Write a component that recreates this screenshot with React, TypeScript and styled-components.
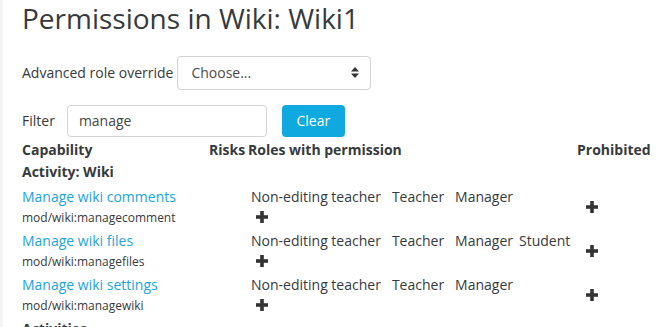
import React from 'react'
import styled, { createGlobalStyle } from 'styled-components'

const GlobalStyle = createGlobalStyle`
    html, body {
        margin: 0;
        padding: 0;
        background: #fff;
    }
    body {
        font-family: "Open Sans", "Liberation Sans", sans-serif;
        color: #373a3c;
        font-size: 14px;
    }
`

const Page = styled.div`
    border-left: 3px solid #f2f2f2;
    padding: 2px 0 0 19px;
    height: 327px;
    overflow: hidden;
    box-sizing: border-box;
`

const Title = styled.h2`
    font-size: 28px;
    font-weight: 400;
    line-height: 1.2;
    margin: 0 0 20px;
`

const FormRow = styled.div<{ gap: number; bottom: number }>`
    display: flex;
    align-items: center;
    gap: ${props => props.gap}px;
    margin-bottom: ${props => props.bottom}px;
`

const Label = styled.label`
    font-size: 14px;
`

const Select = styled.div`
    width: 194px;
    height: 34px;
    box-sizing: border-box;
    border: 1px solid #d3d3d3;
    border-radius: 4px;
    display: flex;
    align-items: center;
    justify-content: space-between;
    padding: 0 11px 0 13px;
    font-size: 14px;
    color: #4a4a4a;
`

const Input = styled.div`
    width: 200px;
    height: 32px;
    box-sizing: border-box;
    border: 1px solid #d3d3d3;
    border-radius: 4px;
    display: flex;
    align-items: center;
    padding: 0 11px;
    font-size: 14px;
    color: #464646;
`

const Button = styled.button`
    height: 32px;
    width: 63px;
    margin-left: 3px;
    border: none;
    border-radius: 4px;
    background: #0fa9df;
    color: #fff;
    font-family: inherit;
    font-size: 14px;
    padding: 0;
`

const Table = styled.table`
    border-collapse: collapse;
    table-layout: fixed;
    width: 634px;
    margin-top: -2px;

    th, td {
        padding: 0;
        text-align: left;
    }
`

const HeadCell = styled.th`
    font-weight: 700;
    height: 22px;
    vertical-align: middle;
`

const GroupCell = styled.td`
    font-weight: 700;
    height: 22px;
    padding-bottom: 3px !important;
`

const CapCell = styled.td`
    vertical-align: top;
    height: 44px;
`

const CapLink = styled.a`
    display: block;
    color: #1ba4e0;
    text-decoration: none;
    line-height: 22px;
`

const CapName = styled.div`
    font-size: 12px;
    line-height: 20px;
`

const RolesCell = styled.td`
    vertical-align: top;
    padding-left: 3px !important;
`

const RoleLine = styled.div`
    line-height: 21px;
    white-space: nowrap;
`

const Role = styled.span<{ space: number }>`
    margin-right: ${props => props.space}px;
`

const AddCell = styled.td<{ pad?: number }>`
    vertical-align: middle;
    padding-left: ${props => props.pad || 0}px !important;
`

const PlusWrap = styled.div`
    height: 20px;
    display: flex;
    align-items: center;
    padding-left: 5px;
`

const Plus = () => (
    <svg width="12" height="12" viewBox="0 0 12 12">
        <rect x="4.2" y="0" width="3.6" height="12" fill="#333" />
        <rect x="0" y="4.2" width="12" height="3.6" fill="#333" />
    </svg>
)

const Arrows = () => (
    <svg width="8" height="11" viewBox="0 0 8 11">
        <path d="M0 4.5 L4 0 L8 4.5 Z" fill="#333" />
        <path d="M0 6.5 L4 11 L8 6.5 Z" fill="#333" />
    </svg>
)

const capabilities = [
    { title: 'Manage wiki comments', name: 'mod/wiki:managecomment', roles: ['Non-editing teacher', 'Teacher', 'Manager'] },
    { title: 'Manage wiki files', name: 'mod/wiki:managefiles', roles: ['Non-editing teacher', 'Teacher', 'Manager', 'Student'] },
    { title: 'Manage wiki settings', name: 'mod/wiki:managewiki', roles: ['Non-editing teacher', 'Teacher', 'Manager'] },
]

export default function App() {
    return (
        <>
            <GlobalStyle />
            <Page>
                <Title>Permissions in Wiki: Wiki1</Title>
                <FormRow gap={4} bottom={15}>
                    <Label>Advanced role override</Label>
                    <Select>
                        <span>Choose...</span>
                        <Arrows />
                    </Select>
                </FormRow>
                <FormRow gap={12} bottom={4}>
                    <Label>Filter</Label>
                    <Input>manage</Input>
                    <Button>Clear</Button>
                </FormRow>
                <Table>
                    <colgroup>
                        <col style={{ width: 187 }} />
                        <col style={{ width: 39 }} />
                        <col style={{ width: 329 }} />
                        <col />
                    </colgroup>
                    <thead>
                        <tr>
                            <HeadCell>Capability</HeadCell>
                            <HeadCell>Risks</HeadCell>
                            <HeadCell>Roles with permission</HeadCell>
                            <HeadCell>Prohibited</HeadCell>
                        </tr>
                    </thead>
                    <tbody>
                        <tr>
                            <GroupCell colSpan={4}>Activity: Wiki</GroupCell>
                        </tr>
                        {capabilities.map(cap => (
                            <tr key={cap.name}>
                                <CapCell>
                                    <CapLink href="#">{cap.title}</CapLink>
                                    <CapName>{cap.name}</CapName>
                                </CapCell>
                                <td />
                                <RolesCell>
                                    <RoleLine>
                                        {cap.roles.map(role => (
                                            <Role key={role} space={role === 'Manager' ? 6 : 11}>{role}</Role>
                                        ))}
                                    </RoleLine>
                                    <PlusWrap><Plus /></PlusWrap>
                                </RolesCell>
                                <AddCell pad={9}><Plus /></AddCell>
                            </tr>
                        ))}
                        <tr>
                            <GroupCell colSpan={4}>Activities</GroupCell>
                        </tr>
                    </tbody>
                </Table>
            </Page>
        </>
    )
}
